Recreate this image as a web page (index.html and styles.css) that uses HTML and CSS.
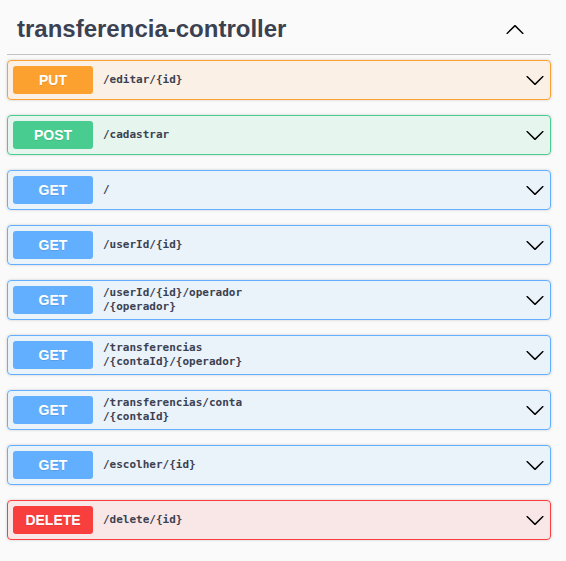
FILE: index.html
```html
<!DOCTYPE html>
<html>
<head>
<meta charset="utf-8">
<link rel="stylesheet" href="styles.css">
</head>
<body>
<div class="tag-section">
  <h3 class="tag-header">
    <span class="tag-title">transferencia-controller</span>
    <svg class="arrow" viewBox="0 0 20 20" width="20" height="20"><path d="M17.418 14.891c.272.268.709.268.979 0s.271-.701 0-.969l-7.908-7.830c-.27-.268-.707-.268-.979 0l-7.908 7.83c-.27.268-.27.701 0 .969.271.268.709.268.979 0L10 7.75l7.418 7.141z"/></svg>
  </h3>

  <div class="opblock put">
    <span class="method">PUT</span>
    <span class="path">/editar/{id}</span>
    <svg class="arrow" viewBox="0 0 20 20" width="20" height="20"><path d="M17.418 6.109c.272-.268.709-.268.979 0s.271.701 0 .969l-7.908 7.83c-.27.268-.707.268-.979 0l-7.908-7.83c-.27-.268-.27-.701 0-.969.271-.268.709-.268.979 0L10 13.25l7.418-7.141z"/></svg>
  </div>

  <div class="opblock post">
    <span class="method">POST</span>
    <span class="path">/cadastrar</span>
    <svg class="arrow" viewBox="0 0 20 20" width="20" height="20"><path d="M17.418 6.109c.272-.268.709-.268.979 0s.271.701 0 .969l-7.908 7.83c-.27.268-.707.268-.979 0l-7.908-7.83c-.27-.268-.27-.701 0-.969.271-.268.709-.268.979 0L10 13.25l7.418-7.141z"/></svg>
  </div>

  <div class="opblock get">
    <span class="method">GET</span>
    <span class="path">/</span>
    <svg class="arrow" viewBox="0 0 20 20" width="20" height="20"><path d="M17.418 6.109c.272-.268.709-.268.979 0s.271.701 0 .969l-7.908 7.83c-.27.268-.707.268-.979 0l-7.908-7.83c-.27-.268-.27-.701 0-.969.271-.268.709-.268.979 0L10 13.25l7.418-7.141z"/></svg>
  </div>

  <div class="opblock get">
    <span class="method">GET</span>
    <span class="path">/userId/{id}</span>
    <svg class="arrow" viewBox="0 0 20 20" width="20" height="20"><path d="M17.418 6.109c.272-.268.709-.268.979 0s.271.701 0 .969l-7.908 7.83c-.27.268-.707.268-.979 0l-7.908-7.83c-.27-.268-.27-.701 0-.969.271-.268.709-.268.979 0L10 13.25l7.418-7.141z"/></svg>
  </div>

  <div class="opblock get">
    <span class="method">GET</span>
    <span class="path">/userId/{id}/operador<br>/{operador}</span>
    <svg class="arrow" viewBox="0 0 20 20" width="20" height="20"><path d="M17.418 6.109c.272-.268.709-.268.979 0s.271.701 0 .969l-7.908 7.83c-.27.268-.707.268-.979 0l-7.908-7.83c-.27-.268-.27-.701 0-.969.271-.268.709-.268.979 0L10 13.25l7.418-7.141z"/></svg>
  </div>

  <div class="opblock get">
    <span class="method">GET</span>
    <span class="path">/transferencias<br>/{contaId}/{operador}</span>
    <svg class="arrow" viewBox="0 0 20 20" width="20" height="20"><path d="M17.418 6.109c.272-.268.709-.268.979 0s.271.701 0 .969l-7.908 7.83c-.27.268-.707.268-.979 0l-7.908-7.83c-.27-.268-.27-.701 0-.969.271-.268.709-.268.979 0L10 13.25l7.418-7.141z"/></svg>
  </div>

  <div class="opblock get">
    <span class="method">GET</span>
    <span class="path">/transferencias/conta<br>/{contaId}</span>
    <svg class="arrow" viewBox="0 0 20 20" width="20" height="20"><path d="M17.418 6.109c.272-.268.709-.268.979 0s.271.701 0 .969l-7.908 7.83c-.27.268-.707.268-.979 0l-7.908-7.83c-.27-.268-.27-.701 0-.969.271-.268.709-.268.979 0L10 13.25l7.418-7.141z"/></svg>
  </div>

  <div class="opblock get">
    <span class="method">GET</span>
    <span class="path">/escolher/{id}</span>
    <svg class="arrow" viewBox="0 0 20 20" width="20" height="20"><path d="M17.418 6.109c.272-.268.709-.268.979 0s.271.701 0 .969l-7.908 7.83c-.27.268-.707.268-.979 0l-7.908-7.83c-.27-.268-.27-.701 0-.969.271-.268.709-.268.979 0L10 13.25l7.418-7.141z"/></svg>
  </div>

  <div class="opblock delete">
    <span class="method">DELETE</span>
    <span class="path">/delete/{id}</span>
    <svg class="arrow" viewBox="0 0 20 20" width="20" height="20"><path d="M17.418 6.109c.272-.268.709-.268.979 0s.271.701 0 .969l-7.908 7.83c-.27.268-.707.268-.979 0l-7.908-7.83c-.27-.268-.27-.701 0-.969.271-.268.709-.268.979 0L10 13.25l7.418-7.141z"/></svg>
  </div>
</div>
</body>
</html>
```

FILE: styles.css
```css
html, body {
  margin: 0;
  padding: 0;
  background: #fafafa;
  font-family: "Liberation Sans", Arial, sans-serif;
  color: #3b4151;
}

.tag-section {
  padding: 0 15px 0 7px;
}

.tag-header {
  display: flex;
  align-items: center;
  margin: 0 0 5px 0;
  padding: 12px 26px 9px 10px;
  border-bottom: 1px solid rgba(59, 65, 81, 0.3);
  font-size: 24px;
  line-height: 33px;
  font-weight: bold;
  color: #3b4151;
}

.tag-title {
  flex: 1;
}

.arrow {
  flex: none;
  display: block;
  fill: #000;
}

.opblock {
  display: flex;
  align-items: center;
  padding: 5px;
  margin-bottom: 15px;
  border: 1px solid;
  border-radius: 4px;
  box-shadow: 0 0 3px rgba(0, 0, 0, 0.19);
}

.method {
  flex: none;
  width: 80px;
  padding: 6px 0;
  border-radius: 3px;
  text-align: center;
  font-size: 14px;
  line-height: 16px;
  font-weight: bold;
  color: #fff;
  text-shadow: 0 1px 0 rgba(0, 0, 0, 0.1);
}

.path {
  flex: 1;
  padding: 0 10px;
  font-family: "DejaVu Sans Mono", monospace;
  font-size: 11px;
  line-height: 14px;
  font-weight: 600;
  color: #3b4151;
}

.put { background: rgba(252, 161, 48, 0.1); border-color: #fca130; }
.put .method { background: #fca130; }

.post { background: rgba(73, 204, 144, 0.1); border-color: #49cc90; }
.post .method { background: #49cc90; }

.get { background: rgba(97, 175, 254, 0.1); border-color: #61affe; }
.get .method { background: #61affe; }

.delete { background: rgba(249, 62, 62, 0.1); border-color: #f93e3e; }
.delete .method { background: #f93e3e; }
```
